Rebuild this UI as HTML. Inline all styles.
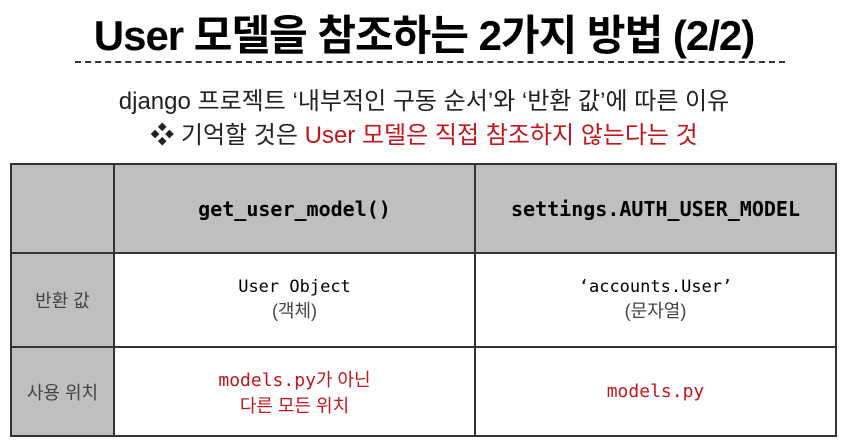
<!DOCTYPE html>
<html><head><meta charset="utf-8"><style>
body{margin:0;width:848px;height:443px;background:#fff;position:relative;overflow:hidden;font-family:"Liberation Sans","Noto Sans CJK KR",sans-serif}
.t{position:absolute;left:0;width:848px;text-align:center;white-space:nowrap}
.dash{position:absolute;left:75px;width:710px;top:61px;border-top:2px dashed #333}
table{position:absolute;left:10px;top:163px;border-collapse:collapse;width:827px}
td{border:2px solid #333;text-align:center;padding:0;font-size:17px}
.g{background:#bfbfbf}
.m{font-family:"DejaVu Sans Mono","Noto Sans CJK KR",monospace;}
.r{color:#c0161c}
</style></head><body>
<div class="t" style="top:2px;font-size:42px;font-weight:bold;letter-spacing:-1px">User 모델을 참조하는 2가지 방법 (2/2)</div>
<div class="dash"></div>
<div class="t" style="top:81px;font-size:24px;color:#222;letter-spacing:0px">django 프로젝트 ‘내부적인 구동 순서’와 ‘반환 값’에 따른 이유</div>
<div class="t" style="top:115px;font-size:24px;color:#222;letter-spacing:0px">❖ 기억할 것은 <span class="r">User 모델은 직접 참조하지 않는다는 것</span></div>
<table>
<tr style="height:89px"><td class="g" style="width:101px"></td><td class="g m" style="width:359px;font-size:20px;font-weight:bold">get_user_model()</td><td class="g m" style="font-size:20px;font-weight:bold">settings.AUTH_USER_MODEL</td></tr>
<tr style="height:94px"><td class="g" style="color:#444;font-size:18px">반환 값</td><td><span class="m">User Object</span><br><span style="color:#444;font-size:18px">(객체)</span></td><td><span class="m">‘accounts.User’</span><br><span style="color:#444;font-size:18px">(문자열)</span></td></tr>
<tr style="height:89px"><td class="g" style="color:#444;font-size:18px">사용 위치</td><td class="r" style="font-size:18px"><span class="m">models.py</span>가 아닌<br>다른 모든 위치</td><td class="r m" style="font-size:18px">models.py</td></tr>
</table>
</body></html>
